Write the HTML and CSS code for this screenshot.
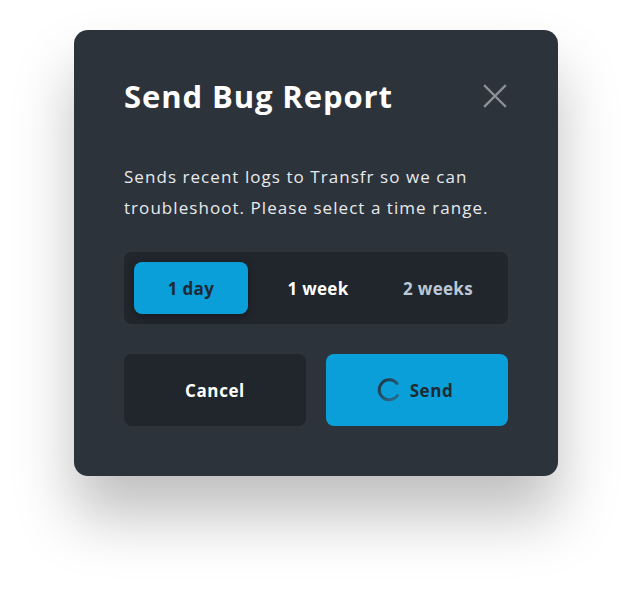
FILE: index.html
```html
<!DOCTYPE html>
<html lang="en">
<head>
  <meta charset="UTF-8">
  <title>Send Bug Report</title>
  <meta name="viewport" content="width=device-width, initial-scale=1">
  <link rel="stylesheet" href="styles.css">
</head>
<body>
  <div class="dialog">
    <div class="dialog-header">
      <h1>Send Bug Report</h1>
      <button class="close" aria-label="Close">
        <svg width="24" height="24" viewBox="0 0 24 24">
          <path d="M2 2 L22 22 M22 2 L2 22" stroke="currentColor" stroke-width="2.4" stroke-linecap="square"/>
        </svg>
      </button>
    </div>

    <p class="desc">Sends recent logs to Transfr so we can troubleshoot. Please select a time range.</p>

    <div class="range">
      <button class="range-opt selected">1 day</button>
      <button class="range-opt">1 week</button>
      <button class="range-opt muted">2 weeks</button>
    </div>

    <div class="actions">
      <button class="btn btn-cancel">Cancel</button>
      <button class="btn btn-send">
        <svg class="spinner" width="24" height="24" viewBox="0 0 24 24">
          <defs>
            <linearGradient id="spin" x1="0" y1="0" x2="1" y2="1">
              <stop offset="0" stop-color="#1f3442"/>
              <stop offset="1" stop-color="#2a6f93"/>
            </linearGradient>
          </defs>
          <path d="M20 5.5 A10 10 0 1 0 20.5 17.5" fill="none" stroke="url(#spin)" stroke-width="3" stroke-linecap="round"/>
        </svg>
        Send
      </button>
    </div>
  </div>
</body>
</html>
```

FILE: styles.css
```css
html {
  height: 100%;
}
body {
  margin: 0;
  min-height: 100%;
  box-sizing: border-box;
  padding: 30px 74px;
  background-color: #fff;
  font-family: "Open Sans", sans-serif;
}
.dialog {
  width: 384px;
  padding: 44px 50px 50px;
  background-color: #2c333b;
  border-radius: 14px;
  box-shadow: 0 40px 60px rgba(0, 0, 0, 0.25);
}
.dialog-header {
  display: flex;
  justify-content: space-between;
  align-items: center;
}
h1 {
  margin: 0;
  font-size: 31px;
  line-height: 44px;
  font-weight: 700;
  color: #fff;
  letter-spacing: 0.9px;
}
.close {
  padding: 0;
  margin-right: 1px;
  background: none;
  border: none;
  color: #8b9096;
  display: flex;
}
.desc {
  margin: 43px 0 29px;
  font-size: 17px;
  line-height: 31px;
  color: #e8eaec;
  letter-spacing: 1.05px;
}
button {
  font-family: inherit;
  cursor: pointer;
}
.range {
  display: flex;
  padding: 10px;
  background-color: #21252c;
  border-radius: 8px;
}
.range-opt {
  flex: 1;
  height: 52px;
  border: none;
  border-radius: 8px;
  background: none;
  font-size: 17px;
  font-weight: 700;
  color: #fff;
  letter-spacing: 0.3px;
}
.range-opt.selected {
  flex: 0 0 114px;
  margin-right: 10px;
  background-color: #0a9fd8;
  color: #1d2a34;
  box-shadow: 0 2px 8px rgba(0, 0, 0, 0.3);
}
.range-opt.muted {
  color: #b9c8d6;
}
.actions {
  display: flex;
  gap: 20px;
  margin-top: 30px;
}
.btn {
  flex: 1;
  height: 72px;
  border: none;
  border-radius: 8px;
  font-size: 17px;
  font-weight: 700;
  letter-spacing: 0.6px;
  display: flex;
  align-items: center;
  justify-content: center;
  gap: 9px;
}
.btn-cancel {
  background-color: #21252c;
  color: #fff;
}
.btn-send {
  background-color: #0a9fd8;
  color: #1d2a34;
}
.spinner {
  margin-left: -4px;
}
```
